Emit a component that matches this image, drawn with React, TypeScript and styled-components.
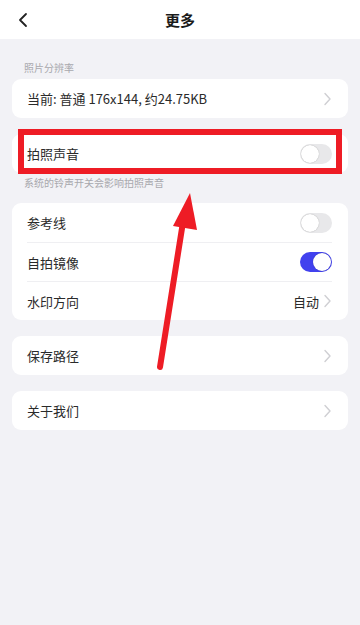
import styled, { createGlobalStyle } from 'styled-components';

const GlobalStyle = createGlobalStyle`
  html, body {
    margin: 0;
    padding: 0;
    background: #f2f2f6;
    font-family: "Noto Sans CJK SC", "Noto Sans", sans-serif;
  }
`;

const Page = styled.div`
  position: relative;
  width: 360px;
  min-height: 625px;
  background: #f2f2f6;
`;

const Header = styled.header`
  height: 39px;
  background: #ffffff;
  display: flex;
  align-items: center;
  justify-content: center;
  position: relative;
`;

const BackButton = styled.button`
  position: absolute;
  left: 14px;
  top: 10px;
  width: 18px;
  height: 20px;
  padding: 0;
  border: none;
  background: transparent;
  display: flex;
  align-items: center;
  justify-content: center;
`;

const Title = styled.h1`
  margin: 0;
  font-size: 15px;
  font-weight: 700;
  color: #1a1a1a;
`;

const Content = styled.main`
  padding: 0 12px;
  display: flex;
  flex-direction: column;
`;

const SectionLabel = styled.div<{ $top?: number }>`
  font-size: 10px;
  color: #a8a8ad;
  line-height: 14px;
  padding-left: 12px;
  margin-top: ${p => p.$top ?? 0}px;
`;

const Card = styled.section<{ $top?: number }>`
  background: #ffffff;
  border-radius: 9px;
  margin-top: ${p => p.$top ?? 0}px;
  padding: 0 16px 0 15px;
`;

const Row = styled.div<{ $divider?: boolean }>`
  height: 39px;
  display: flex;
  align-items: center;
  justify-content: space-between;
  border-top: ${p => (p.$divider ? '1px solid #efeff2' : 'none')};
  box-sizing: border-box;
`;

const RowLabel = styled.span`
  font-size: 13px;
  color: #2a2a2a;
`;

const RowRight = styled.div`
  display: flex;
  align-items: center;
  gap: 4px;
  font-size: 13px;
  color: #2a2a2a;
`;

const Toggle = styled.div<{ $on?: boolean }>`
  width: 32px;
  height: 20px;
  border-radius: 10px;
  background: ${p => (p.$on ? '#4141ee' : '#e8e8ea')};
  position: relative;

  &::after {
    content: '';
    position: absolute;
    top: 1px;
    left: ${p => (p.$on ? '13px' : '1px')};
    width: 18px;
    height: 18px;
    border-radius: 50%;
    background: #ffffff;
    box-shadow: 0 0 1px rgba(0, 0, 0, 0.35);
  }
`;

const Overlay = styled.svg`
  position: absolute;
  left: 0;
  top: 0;
  pointer-events: none;
`;

const Chevron = () => (
  <svg width="9" height="14" viewBox="0 0 9 14" fill="none">
    <path d="M2 1.5l5 5.5-5 5.5" stroke="#cfcfd3" strokeWidth="1.4" strokeLinecap="round" strokeLinejoin="round" />
  </svg>
);

export default function App() {
  return (
    <>
      <GlobalStyle />
      <Page>
        <Header>
          <BackButton>
            <svg width="10" height="16" viewBox="0 0 10 16" fill="none">
              <path d="M8 2L2 8l6 6" stroke="#222" strokeWidth="1.8" strokeLinecap="round" strokeLinejoin="round" />
            </svg>
          </BackButton>
          <Title>更多</Title>
        </Header>
        <Content>
          <SectionLabel $top={22}>照片分辨率</SectionLabel>
          <Card $top={4}>
            <Row>
              <RowLabel>当前: 普通 176x144, 约24.75KB</RowLabel>
              <Chevron />
            </Row>
          </Card>
          <Card $top={16}>
            <Row>
              <RowLabel>拍照声音</RowLabel>
              <Toggle />
            </Row>
          </Card>
          <SectionLabel $top={3}>系统的铃声开关会影响拍照声音</SectionLabel>
          <Card $top={13}>
            <Row>
              <RowLabel>参考线</RowLabel>
              <Toggle />
            </Row>
            <Row $divider>
              <RowLabel>自拍镜像</RowLabel>
              <Toggle $on />
            </Row>
            <Row $divider>
              <RowLabel>水印方向</RowLabel>
              <RowRight>
                自动
                <Chevron />
              </RowRight>
            </Row>
          </Card>
          <Card $top={16}>
            <Row>
              <RowLabel>保存路径</RowLabel>
              <Chevron />
            </Row>
          </Card>
          <Card $top={16}>
            <Row>
              <RowLabel>关于我们</RowLabel>
              <Chevron />
            </Row>
          </Card>
        </Content>
        <Overlay width="360" height="625" viewBox="0 0 360 625">
          <rect x="21" y="132" width="318" height="39" fill="none" stroke="#ee1c25" strokeWidth="6" />
          <line x1="160" y1="367" x2="183" y2="222" stroke="#ee1c25" strokeWidth="6" strokeLinecap="round" />
          <polygon points="190,193 173,226 197,230" fill="#ee1c25" />
        </Overlay>
      </Page>
    </>
  );
}
